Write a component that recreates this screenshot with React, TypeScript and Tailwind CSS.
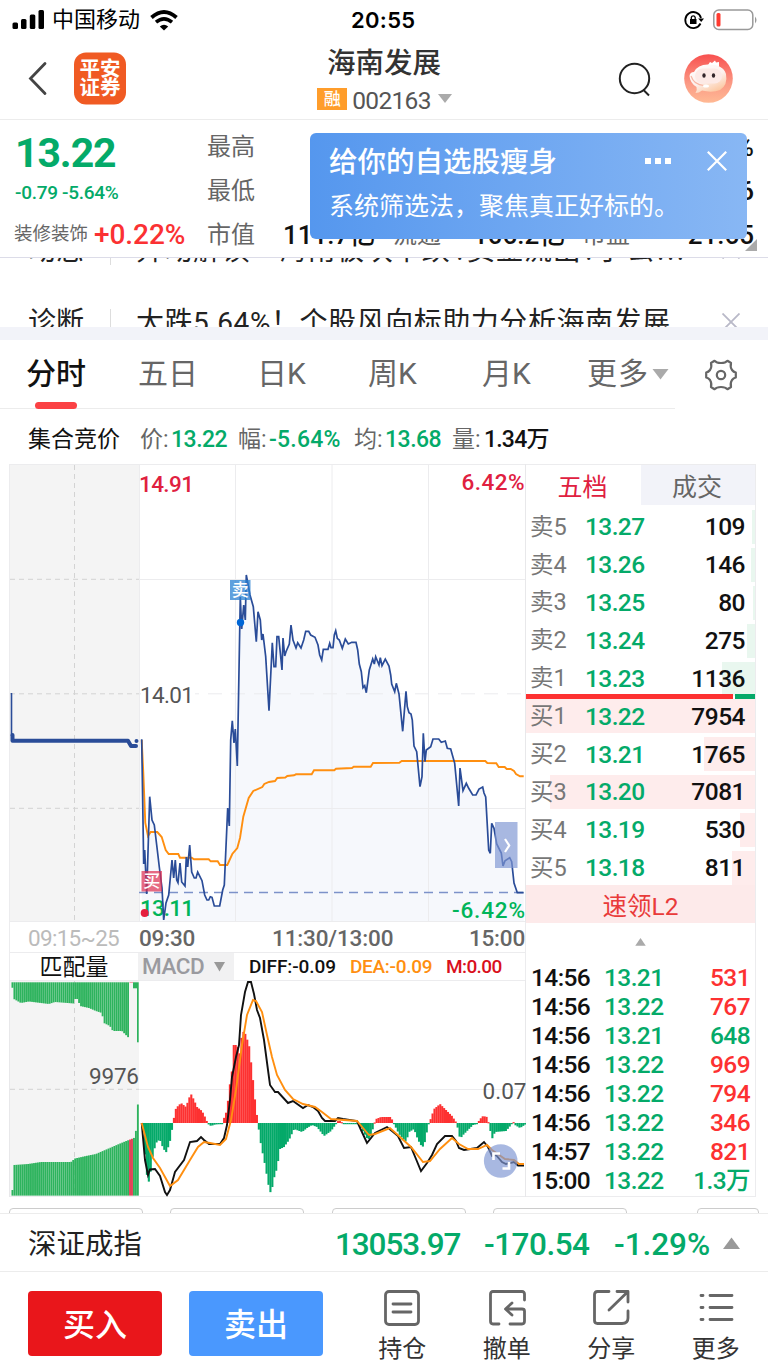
import React from 'react';

type Point = [number, number];

interface OrderLevel {
    label: string;
    price: string;
    volume: string;
    depth: number; // width of the depth bar in px
}

interface Trade {
    time: string;
    price: string;
    volume: string;
    up: boolean;
}

const SELL_LEVELS: OrderLevel[] = [
    { label: '卖5', price: '13.27', volume: '109', depth: 3 },
    { label: '卖4', price: '13.26', volume: '146', depth: 4 },
    { label: '卖3', price: '13.25', volume: '80', depth: 2 },
    { label: '卖2', price: '13.24', volume: '275', depth: 8 },
    { label: '卖1', price: '13.23', volume: '1136', depth: 33 },
];

const BUY_LEVELS: OrderLevel[] = [
    { label: '买1', price: '13.22', volume: '7954', depth: 229 },
    { label: '买2', price: '13.21', volume: '1765', depth: 51 },
    { label: '买3', price: '13.20', volume: '7081', depth: 205 },
    { label: '买4', price: '13.19', volume: '530', depth: 15 },
    { label: '买5', price: '13.18', volume: '811', depth: 23 },
];

const TRADES: Trade[] = [
    { time: '14:56', price: '13.21', volume: '531', up: true },
    { time: '14:56', price: '13.22', volume: '767', up: true },
    { time: '14:56', price: '13.21', volume: '648', up: false },
    { time: '14:56', price: '13.22', volume: '969', up: true },
    { time: '14:56', price: '13.22', volume: '794', up: true },
    { time: '14:56', price: '13.22', volume: '346', up: true },
    { time: '14:57', price: '13.22', volume: '821', up: true },
    { time: '15:00', price: '13.22', volume: '1.3万', up: false },
];

const PRICE_LINE =
    '141.7,739.3 143.7,864 144.7,850 146.7,894 149.7,796.7 152,820 154.3,825 156.7,845 159.3,867 162,888 163.7,920 166,903 168.7,895 172,860 173.7,878 175.3,860 176.7,880 178,882.7 180,863 181.7,882 185,886 186.3,857 187.7,867 189.7,845 191.7,872 194.3,878 196,878 197.7,872 202,880.7 204.7,895 207,900 208.7,900 210.3,896.7 212,897.3 214.3,906 219.7,906 222.7,890 224.3,885 227.7,808 229.3,826 230.7,740 232.3,720.7 234,743 235.3,729 237.3,766 240.3,597 241.7,629 243.7,605 245.3,620 246.3,575 250,595 253.3,606.7 256.3,641.7 258,611.7 260.3,620 261.7,640 263,634 265.7,656.7 269,710.7 272.3,642.7 274,666.7 275.7,666.7 277,636.7 278.7,636.7 282,670 283,638 284.7,656 286,651.7 289.3,644 291,625 293,640 296,648 297.7,642.7 301,648 303.7,640 305.7,631.3 308.7,631.3 310.7,635 315,637.3 318,645 319.7,655 321.7,660 323.3,649.3 328,649.3 329.7,643.3 331,647.7 333,647.7 334.3,635 335.7,630.7 337.3,638.3 339.3,640 342.3,648.3 345.3,639 348.3,644 351.7,642.3 356,642.3 357.7,650 359.3,664 361.3,671.7 363,687.7 364.7,685.7 366.3,692.7 369.3,670 372.7,659 374.3,664 375.7,656.7 379,665 380.3,657.7 382,665.7 385.3,659 389,666 390.7,675 391.7,684 394.7,691.7 396.3,683.3 399,694 402.7,731.3 406,691.3 407.3,706.7 409,712.7 411,714 412.3,720 414,746 416.7,751.7 420,786.7 422,776.7 423.3,733.3 425,761.7 426.3,750 430.7,746.7 433,739 438.7,739 441.3,742.3 445.3,741 447.3,748.3 450.7,749 454.7,763.3 458.7,806 460,768 463,790.7 466.3,783.3 468.7,788.3 472.7,795 476,795 479,789 482.7,787 484,793 485.7,797 488.7,850 490.3,853.3 491.7,823.3 494,828.3 496.7,844 501.3,853 503,866 505,860.7 509.7,857.7 511.7,861.7 514,883 517.3,892.7 523.7,892.7';

const AVERAGE_LINE =
    '141.7,740 143.3,773 145.3,823 148,836 150.7,832 157.3,832 161.7,837 165.7,850 168.7,854 178.3,854 180,857.7 191.7,857.7 194,859.3 208.7,859.3 210.7,861.3 217.7,861.3 220,865 227.3,865 232.3,854 237.3,848 240,838 243.3,816.7 248.7,798 253.3,791 262.3,787 264.3,784 269,782 275,781 277.3,778 285.3,777.5 287.3,776 294,775.3 296,774.3 311.7,774.3 314,770.3 334.3,770.3 336,768.7 352,768 353.7,766.7 370.7,766.7 373,763 399.3,762.7 401.7,761 485.3,761 487.3,763 496.3,763.3 498.7,767 504.7,767 506.7,769 510.7,769 514,771 516,774 520,776.3 523.7,776.3';

const DIFF_LINE =
    '141.7,1123 145,1160 148,1175 150,1169.5 155,1169 160,1176 165,1192 167,1195 170,1190 175,1172 184,1160 190,1142 197,1141 201,1137 204,1140 209,1144 220,1144 224,1138 227,1125 230,1100 232,1077 236,1057 239,1045 241,1015 245,992 248,982 251,982 254,994 257,1010 260,1018 264,1040 268,1070 270,1085 275,1092 278,1092 288,1103 293,1101 303,1108 308,1105 313,1107 318,1111 322,1118 325,1121 335,1121 338,1118 343,1119 357,1121 361,1130 367,1143 375,1133 387,1127 392,1131 398,1136 404,1148 411,1147 416,1159 421,1171 427,1163 432,1155 437,1144 445,1136 452,1136 456,1141 459,1148 464,1150 477,1148 484,1142 488,1147 492,1156 496,1155 502,1162 506,1164 514,1162 518,1165.5 524,1165.5';

const DEA_LINE =
    '141.7,1123 148,1147 153,1158 160,1168 170,1186 178,1180 190,1160 198,1147 204,1142 210,1143 220,1145 226,1139 231,1120 236,1090 242,1045 247,1015 253,1000 256,1001 262,1012 267,1035 272,1057 277,1075 285,1090 293,1099 303,1104 315,1107 322,1112 331,1119 357,1121 363,1128 369,1135 375,1134 390,1128 400,1137 411,1147 423,1162 430,1161 440,1149 452,1138 459,1144 468,1149 478,1149 487,1145 492,1150 505,1159 514,1160 519,1164 524,1164';

// outline of the MACD histogram around its zero line at 1123
const ZERO = 1123;
const MACD_PROFILE: Point[] = [
    [142, 1130], [145, 1168], [147, 1184], [149, 1178], [151, 1160], [153, 1150], [156, 1141], [159, 1140], [162, 1148],
    [165, 1152.5], [168, 1145], [170, 1137], [172, 1122], [175, 1108], [180, 1103], [185, 1107], [188, 1098], [190, 1094],
    [193, 1100], [196, 1107], [201, 1111], [204, 1117], [207, 1124], [210, 1126], [214, 1124.5], [221, 1124], [223, 1118],
    [226, 1110], [228, 1090], [231, 1070], [232.5, 1045], [236, 1045], [239, 1055], [241, 1031], [244, 1033], [248, 1045],
    [251, 1070], [254, 1100], [257, 1124], [260, 1145], [264, 1165], [268, 1188], [270, 1194], [273, 1178], [276, 1168],
    [279, 1149], [283, 1147], [288, 1140], [293, 1129], [301, 1132], [306, 1128], [311, 1125], [316, 1127], [323, 1136],
    [330, 1131], [335, 1124], [337, 1121], [340, 1121], [342, 1124], [358, 1124], [363, 1133], [367, 1140], [370, 1136],
    [373, 1124], [375, 1119], [380, 1117], [390, 1117], [392, 1122], [394, 1126], [398, 1134], [405, 1142], [408, 1132],
    [413, 1129], [417, 1140], [421, 1147], [423, 1146], [427, 1126], [430, 1118], [433, 1109], [439, 1104], [444, 1109],
    [451, 1116], [455, 1122], [457, 1129], [459, 1139], [462, 1135], [467, 1130], [472, 1125], [476, 1124], [479, 1119],
    [482, 1116], [486, 1117], [488, 1124], [491, 1139], [494, 1132], [505, 1131], [510, 1125], [512, 1121], [514, 1125],
    [519, 1128], [525, 1124],
];

const MATCHED_TOP: Point[] = [
    [11, 984], [13, 999], [20, 1003], [28, 1001.5], [40, 1003], [48, 1004], [54, 1002], [73, 1003.5], [74, 999], [77, 999],
    [79, 1006], [88, 1008], [95, 1011], [101, 1013], [103, 1023], [109, 1026], [112, 1031], [121, 1031], [129, 1039],
];

const MATCHED_BOTTOM: Point[] = [
    [11, 1190], [12.5, 1190], [13, 1165], [27, 1164], [40, 1162], [70, 1162], [74, 1158.5], [85, 1156], [95, 1154],
    [103, 1150.5], [110, 1147.5], [118, 1144], [124, 1141.5], [133, 1138], [135.5, 1129], [136.9, 1104.5], [139, 1104.5],
];

const valueAt = (profile: Point[], x: number) => {
    const i = profile.findIndex((p) => p[0] >= x);
    if (i <= 0) return profile[i === 0 ? 0 : profile.length - 1][1];
    const [x0, y0] = profile[i - 1];
    const [x1, y1] = profile[i];
    return y0 + ((y1 - y0) * (x - x0)) / (x1 - x0);
};

const range = (from: number, to: number, step: number) =>
    Array.from({ length: Math.ceil((to - from) / step) }, (_, i) => from + i * step);

const PriceChart: React.FC = () => (
    <svg width="517" height="458" viewBox="9 464 517 458" className="block">
        <rect x="9" y="464" width="130" height="458" fill="#f4f4f4" />
        <polygon points={`${PRICE_LINE} 523.7,922 141.7,922`} fill="#f6f8fc" />
        <g stroke="#ececee" strokeWidth="1">
            <path d="M9 464.5H526M139.5 464V922M235.5 464V922M332 464V922M428.5 464V922M139 579.5H525M139 808.5H525M9 921.5H526" fill="none" />
            <path d="M139 693.8H525" strokeDasharray="14 9" />
        </g>
        <path d="M74.5 465V922M10 579.3H139M10 693.8H139M10 808.3H139" fill="none" stroke="#d3d3d3" strokeDasharray="5 4" />
        <path d="M525.5 464V922" stroke="#e8e8ea" />
        <path d="M9.5 464V922" stroke="#ececee" />
        <path d="M139 892.5H525" stroke="#7d92c9" strokeWidth="1.5" strokeDasharray="9 6" />

        <path d="M11.5 693V736" stroke="#2a4c98" strokeWidth="1.6" />
        <path d="M12.5 735V740.8H128L131 746H136M136.5 741V741" fill="none" stroke="#2a4c98" strokeWidth="4" strokeLinecap="round" strokeLinejoin="round" />

        <g fontFamily="Roboto" fontSize="22.5" fontWeight="500">
            <rect x="141" y="682" width="54" height="24" fill="#fff" />
            <text x="139" y="491.5" textLength="55" fill="#e0203f">14.91</text>
            <text x="461.500" y="490" textLength="63" fill="#e0203f">6.42%</text>
            <text x="140" y="703" textLength="54" fontWeight="400" fill="#555">14.01</text>
            <text x="140" y="916" textLength="54" fill="#00b559">13.11</text>
            <text x="452" y="918" textLength="73" fill="#00b559">-6.42%</text>
        </g>

        <polyline points={AVERAGE_LINE} fill="none" stroke="#ff8f10" strokeWidth="1.9" />
        <polyline points={PRICE_LINE} fill="none" stroke="#2a4c98" strokeWidth="1.7" />

        <g fontFamily="'Noto Sans CJK SC', sans-serif" fontSize="17" fontWeight="500" fill="#fff" textAnchor="middle">
            <rect x="230" y="580" width="20.500" height="20" fill="#2a80d2" opacity="0.75" />
            <text x="240.300" y="596">卖</text>
            <rect x="141.500" y="871" width="20.500" height="20.500" fill="#e02d50" opacity="0.7" />
            <text x="151.800" y="887.300">买</text>
        </g>
        <circle cx="240.500" cy="622.500" r="3.700" fill="#0066d6" />
        <circle cx="144.700" cy="913" r="4" fill="#e5203f" />

        <rect x="495" y="822" width="22.500" height="46" fill="#7f97d3" opacity="0.68" />
        <path d="M505 839L509.200 845.500L505 852" fill="none" stroke="#fff" strokeWidth="2.200" />
    </svg>
);

const MacdChart: React.FC = () => (
    <svg width="517" height="217" viewBox="9 980 517 217" className="block">
        <rect x="9" y="980" width="130" height="216" fill="#f4f4f4" />
        <path d="M9 980.5H526M9 1196.500H526M139 1089.500H525" stroke="#ececee" fill="none" />
        <path d="M9.500 980V1197M525.500 980V1197" stroke="#e8e8ea" fill="none" />
        <path d="M74.500 981V1196M10 1089.300H139" stroke="#d3d3d3" strokeDasharray="5 4" fill="none" />

        {range(11.5, 128, 1.96).map((x) => (
            <rect key={x} x={x} y={982.3} width={1.85} height={valueAt(MATCHED_TOP, x) - 982.3} fill="#2db35d" />
        ))}
        <rect x="129.500" y="982" width="3.500" height="1" fill="#f4a0ac" />
        <rect x="133" y="982.300" width="4" height="6" fill="#2db35d" />
        <rect x="137" y="982.300" width="1.700" height="60" fill="#2db35d" />
        {range(11.5, 138, 1.96).map((x) => (
            <rect
                key={x}
                x={x}
                y={valueAt(MATCHED_BOTTOM, x)}
                width={1.85}
                height={1195.6 - valueAt(MATCHED_BOTTOM, x)}
                fill={x > 128.5 && x < 132 ? '#e23a50' : '#2db35d'}
            />
        ))}

        {range(142, 525, 1.93).map((x) => {
            const y = valueAt(MACD_PROFILE, x);
            return (
                <rect
                    key={x}
                    x={x}
                    y={Math.min(y, ZERO)}
                    width={2.1}
                    height={Math.max(Math.abs(y - ZERO), 1.2)}
                    fill={y < ZERO ? '#fd3131' : '#04a969'}
                />
            );
        })}
        <polyline points={DIFF_LINE} fill="none" stroke="#111" strokeWidth="1.9" />
        <polyline points={DEA_LINE} fill="none" stroke="#ff8f10" strokeWidth="1.9" />

        <g fontFamily="Roboto" fontSize="22.500" fill="#555">
            <text x="89" y="1084" textLength="50">9976</text>
            <text x="482.500" y="1099" textLength="44">0.07</text>
        </g>
        <circle cx="500.700" cy="1161" r="16.800" fill="#7f97d3" opacity="0.68" />
        <path d="M500 1153.500H493.500V1160M502.500 1168.500H509V1162" fill="none" stroke="#fff" strokeWidth="2.600" />
    </svg>
);

const StatusBar: React.FC = () => (
    <div className="flex h-10 items-center pl-3 pr-2.5 text-black">
        <svg width="33" height="20" viewBox="0 0 33 20">
            <rect x="0.500" y="12.500" width="5.500" height="6.500" rx="1.500" />
            <rect x="9" y="9" width="5.500" height="10" rx="1.500" />
            <rect x="17.800" y="4.500" width="5.500" height="14.500" rx="1.500" />
            <rect x="26.500" y="0" width="5.500" height="19" rx="1.500" />
        </svg>
        <span className="ml-[7px] text-[22px] leading-none">中国移动</span>
        <svg className="ml-2.5" width="28" height="21" viewBox="0 0 28 21" fill="none" stroke="#000">
            <path d="M1.500 7.500Q14 -3.500 26.500 7.500" strokeWidth="3.800" />
            <path d="M6 12.200Q14 5.500 22 12.200" strokeWidth="3.600" />
            <path d="M14 20.500L9.800 16.400Q14 13 18.200 16.400Z" fill="#000" stroke="none" />
        </svg>
        <span className="ml-[173px] font-[Inter] text-[22px] font-semibold leading-none tracking-[0.3px]">20:55</span>
        <svg className="ml-auto" width="20" height="20" viewBox="0 0 20 20" fill="none" stroke="#000" strokeWidth="1.800">
            <path d="M16.500 13.500A8 8 0 1 1 17 8" />
            <path d="M14.200 8.500H20L17.200 12Z" fill="#000" stroke="none" />
            <rect x="6" y="9" width="6.500" height="5" fill="#000" stroke="none" />
            <path d="M7.300 9.500V7.500A2 2 0 0 1 11.200 7.500V9.500" strokeWidth="1.300" />
        </svg>
        <svg className="ml-[9px]" width="45" height="22" viewBox="0 0 45 22">
            <rect x="0.800" y="1" width="39" height="19.500" rx="5" fill="none" stroke="#999" strokeWidth="1.500" />
            <rect x="3.500" y="4" width="4" height="13.500" rx="1.500" fill="#ff3b30" />
            <path d="M42 7.500Q45 11 42 14.500Z" fill="#999" />
        </svg>
    </div>
);

const RobotAvatar: React.FC = () => (
    <svg width="49" height="49" viewBox="0 0 49 49">
        <defs>
            <linearGradient id="avatarBg" x1="0" y1="0" x2="0" y2="1">
                <stop offset="0" stopColor="#f8504f" />
                <stop offset="0.600" stopColor="#fb9a85" />
                <stop offset="1" stopColor="#ffb994" />
            </linearGradient>
            <linearGradient id="avatarFace" x1="0" y1="0" x2="0.600" y2="1">
                <stop offset="0" stopColor="#fff" />
                <stop offset="0.600" stopColor="#fdf1ed" />
                <stop offset="1" stopColor="#fcc9a4" />
            </linearGradient>
        </defs>
        <circle cx="24.500" cy="24.500" r="24.300" fill="url(#avatarBg)" />
        <path d="M24 11L26 8L28 9L31 6.500L32 8.500L35 8L35 13Z" fill="#fff" />
        <path d="M5.500 22Q6 18 10 18Q14 10 25 10.500Q39 10.500 42 20Q44 31 36 36Q28 39 18 36.500Q15 39 11.500 39Q13.500 36 12.500 33Q6 29 5.500 22Z" fill="url(#avatarFace)" />
        <rect x="11" y="14.500" width="27" height="15" rx="7.500" fill="#fdeae6" />
        <path d="M7 22Q10 31 20 31.500" fill="none" stroke="#f8b5a2" strokeWidth="1.200" />
        <ellipse cx="22" cy="32" rx="3" ry="1.600" fill="#fff" />
        <ellipse cx="20" cy="21.500" rx="1.700" ry="2.200" fill="#33262a" />
        <ellipse cx="29.500" cy="21.500" rx="1.700" ry="2.200" fill="#33262a" />
    </svg>
);

const Header: React.FC = () => (
    <header className="flex h-20 items-center border-b border-[#ececec]">
        <svg className="ml-[27px] -mt-1" width="22" height="36" viewBox="0 0 22 36" fill="none" stroke="#444" strokeWidth="2.800" strokeLinecap="round">
            <path d="M18 3.500L3.500 18.500L18 33.500" />
        </svg>
        <div className="ml-[25px] flex h-[52px] w-[52px] -translate-y-[1.500px] flex-col items-center justify-center rounded-xl bg-[#f05a23] text-[20.500px] font-bold leading-[19px] text-white">
            <span>平安</span>
            <span>证券</span>
        </div>
        <div className="ml-[180px] flex w-[156px] flex-col items-center pt-0.5">
            <div className="text-[28.500px] font-medium leading-[38px] text-[#333]">海南发展</div>
            <div className="-mt-px flex h-[34px] items-center">
                <span className="ml-px flex h-[22px] w-[30px] items-center justify-center bg-[#ff9d2b] text-[17px] font-medium leading-none text-white">融</span>
                <span className="ml-[5px] mt-1 text-[24.500px] leading-none tracking-[-0.700px] text-[#555]">002163</span>
                <svg className="ml-[7px]" width="14" height="10" viewBox="0 0 14 10">
                    <path d="M0 0H14L7 9Z" fill="#aaa" />
                </svg>
            </div>
        </div>
        <svg className="ml-[156px]" width="34" height="36" viewBox="0 0 34 36" fill="none" stroke="#222" strokeWidth="2">
            <circle cx="16.500" cy="16.500" r="14.700" />
            <path d="M25.500 28L31 33.500" />
        </svg>
        <div className="-mt-[3px] ml-8">
            <RobotAvatar />
        </div>
    </header>
);

const Banner: React.FC = () => (
    <div className="absolute left-[310px] top-[13px] flex h-[106px] w-[437px] flex-col rounded-md bg-linear-to-r from-[#5597ee] to-[#88b7f4] pl-[19px] pr-5 pt-2 text-white">
        <div className="flex h-11 items-center">
            <span className="text-[28.500px] font-medium leading-none">给你的自选股瘦身</span>
            <span className="-mt-1 ml-auto flex gap-1">
                <i className="h-[5.500px] w-1.5 bg-white" />
                <i className="h-[5.500px] w-1.5 bg-white" />
                <i className="h-[5.500px] w-1.5 bg-white" />
            </span>
            <svg className="-mt-[5px] ml-9" width="20" height="20" viewBox="0 0 20 20" stroke="#fff" strokeWidth="2.200">
                <path d="M0.800 0.800L19.200 19.200M19.200 0.800L0.800 19.200" />
            </svg>
        </div>
        <div className="whitespace-nowrap text-[25px] leading-[44px]">系统筛选法，聚焦真正好标的。</div>
    </div>
);

const Quote: React.FC = () => (
    <section className="relative flex h-[138px] border-b border-[#dcdce8]">
        <div className="w-[207px] pl-[15px]">
            <div className="mt-2 h-[50px] text-[41px] font-bold leading-[51px] tracking-[-1.100px] text-[#04aa69]">13.22</div>
            <div className="h-[26px] whitespace-nowrap text-[19px] font-medium leading-[29px] tracking-[-0.300px] text-[#04aa69]">-0.79 -5.64%</div>
            <div className="mt-[11px] flex h-[38px] items-center whitespace-nowrap">
                <span className="-ml-px text-[18.500px] leading-none text-[#666]">装修装饰</span>
                <span className="ml-1.5 mt-0.5 text-[28px] font-medium leading-none tracking-[-0.050px] text-[#fb3133]">+0.22%</span>
            </div>
        </div>
        <div className="flex w-[76px] flex-col pt-[5px] text-[24px] leading-[44px] text-[#666]">
            <span>最高</span>
            <span>最低</span>
            <span>市值</span>
        </div>
        <div className="flex grow flex-col items-end pr-[14px] text-[26px] font-medium leading-[44px] text-[#111]">
            <span className="mt-[5px]">5.21%</span>
            <span>13.76</span>
            <div className="flex w-full items-center whitespace-nowrap">
                <span className="w-[110px]">111.7亿</span>
                <span className="w-[80px] text-[24px] font-normal text-[#666]">流通</span>
                <span className="w-[109px]">106.2亿</span>
                <span className="text-[24px] font-normal text-[#666]">市盈</span>
                <span className="ml-auto">21.65</span>
            </div>
        </div>
        <svg className="absolute right-[11px] top-[119px]" width="12" height="12" viewBox="0 0 12 12">
            <path d="M12 0V12H0Z" fill="#aaa" />
        </svg>
        <Banner />
    </section>
);

const NewsRow: React.FC<{ tag: string; children: React.ReactNode }> = ({ tag, children }) => (
    <div className="flex h-[72px] shrink-0 items-center pl-7 pr-7 text-[28px] leading-none text-[#222]">
        <span className="w-[82px]">{tag}</span>
        <span className="h-7 w-px bg-[#ddd]" />
        <span className="ml-[25px] flex whitespace-nowrap tracking-[0.550px]">{children}</span>
        <svg className="-mt-0.5 ml-auto" width="18" height="18" viewBox="0 0 18 18" stroke="#b9b9c8" strokeWidth="1.800">
            <path d="M0.500 0.500L17.500 17.500M17.500 0.500L0.500 17.500" />
        </svg>
    </div>
);

const PeriodTabs: React.FC = () => (
    <nav className="flex h-[69px] items-start text-[30px] leading-[68px] text-[#666]">
        <div className="relative flex h-[69px] w-[675px] whitespace-nowrap border-b border-[#ececec]">
            <span className="ml-[26px] w-[112px] font-medium text-[#111]">分时</span>
            <span className="w-[119px]">五日</span>
            <span className="w-[111px]">日K</span>
            <span className="w-[114px]">周K</span>
            <span className="w-[105px]">月K</span>
            <span className="tracking-[1px]">更多</span>
            <svg className="ml-[3px] mt-[29px]" width="17" height="11" viewBox="0 0 17 11">
                <path d="M0.500 0H16.500L8.500 10.500Z" fill="#aaa" />
            </svg>
            <i className="absolute bottom-[-1px] left-[35px] h-[7px] w-[42px] rounded-sm bg-[#fb4144]" />
        </div>
        <svg className="ml-[30px] mt-[19px]" width="32" height="32" viewBox="0 0 32 32" fill="none" stroke="#666" strokeWidth="2.200" strokeLinejoin="round">
            <path d="M9.500 1.800Q11.500 4 16 4Q20.500 4 22.500 1.800L26 4Q25 8 27 11Q28.500 13 30.800 13.500V18.500Q28.500 19 27 21Q25 24 26 28L22.500 30.200Q20.500 28 16 28Q11.500 28 9.500 30.200L6 28Q7 24 5 21Q3.500 19 1.200 18.500V13.500Q3.500 13 5 11Q7 8 6 4Z" />
            <circle cx="16" cy="16" r="4.200" />
        </svg>
    </nav>
);

const Summary: React.FC = () => (
    <div className="flex h-[55px] items-center whitespace-nowrap pl-7 pt-[5px] text-[23px] leading-none text-[#666]">
        <span className="w-[112px] text-[#111]">集合竞价</span>
        <span className="w-[31px]">价:</span>
        <span className="w-[67px] font-medium tracking-[-0.500px] text-[#04aa69]">13.22</span>
        <span className="w-[31px]">幅:</span>
        <span className="w-[85px] font-medium tracking-[0.200px] text-[#04aa69]">-5.64%</span>
        <span className="w-[31px]">均:</span>
        <span className="w-[67px] font-medium tracking-[-0.500px] text-[#04aa69]">13.68</span>
        <span className="w-8">量:</span>
        <span className="font-medium tracking-[-0.800px] text-[#111]">1.34万</span>
    </div>
);

const LevelRow: React.FC<{ level: OrderLevel; side: 'sell' | 'buy' }> = ({ level, side }) => (
    <div className="relative flex h-[37.900px] items-center pl-1 pr-[10px] pt-px text-[24.500px] leading-none">
        <i
            className={`absolute right-0 top-[2px] h-[34px] ${side === 'sell' ? 'bg-[#e9f7ef]' : 'bg-[#feecec]'}`}
            style={{ width: level.depth }}
        />
        <span className="relative w-[55px] text-[23.500px] text-[#777]">{level.label}</span>
        <span className="relative font-medium tracking-[-0.600px] text-[#04aa69]">{level.price}</span>
        <span className="relative ml-auto font-medium tracking-[-0.500px] text-[#111]">{level.volume}</span>
    </div>
);

const OrderBook: React.FC = () => (
    <aside className="flex h-[733px] w-[230px] flex-col border-b border-r border-t border-[#ececee]">
        <div className="flex h-10 text-[25px] leading-[46px]">
            <span className="w-[113px] text-center text-[#e0203f]">五档</span>
            <span className="ml-0.5 grow bg-[#f2f3f9] pr-0.5 text-center text-[#666]">成交</span>
        </div>
        <div className="relative mt-[3px]">
            {SELL_LEVELS.map((level) => (
                <LevelRow key={level.label} level={level} side="sell" />
            ))}
            {BUY_LEVELS.map((level) => (
                <LevelRow key={level.label} level={level} side="buy" />
            ))}
            <div className="absolute left-0 right-0 top-[186px] flex h-[5px] gap-[2px]">
                <i className="w-[207px] bg-[#fd3131]" />
                <i className="grow bg-[#04a969]" />
            </div>
        </div>
        <div className="-mt-[2px] h-[38px] bg-[#fdeaea] text-center text-[24.500px] leading-[44px] text-[#e93b3a]">速领L2</div>
        <svg className="ml-[108px] mt-[15px]" width="13" height="10" viewBox="0 0 13 10">
            <path d="M0 9.500H13L6.500 0Z" fill="#aaa" />
        </svg>
        <div className="mt-[18px] flex flex-col">
            {TRADES.map((trade, i) => (
                <div key={i} className="flex h-[29px] items-center pl-[5px] pr-[5px] text-[24.500px] font-medium leading-none tracking-[-0.600px]">
                    <span className="w-[73px] text-[#111]">{trade.time}</span>
                    <span className="text-[#04aa69]">{trade.price}</span>
                    <span className={`ml-auto ${trade.up ? 'text-[#fd3131]' : 'text-[#04aa69]'}`}>{trade.volume}</span>
                </div>
            ))}
        </div>
    </aside>
);

const ChartPanel: React.FC = () => (
    <div className="w-[517px]">
        <PriceChart />
        <div className="flex h-[30px] items-center border-x border-[#ececee] pt-[3px] text-[22.500px] leading-none text-[#666]">
            <span className="ml-[18px] w-[111px] tracking-[-0.700px] text-[#bbb]">09:15~25</span>
            <span className="w-[133px] font-medium tracking-[-0.200px]">09:30</span>
            <span className="font-medium tracking-[-0.150px]">11:30/13:00</span>
            <span className="ml-auto font-medium tracking-[-0.200px]">15:00</span>
        </div>
        <div className="flex h-7 items-center border-x border-t border-[#ececee] text-[19px] font-medium leading-none">
            <span className="w-32 pt-0.5 text-center text-[23px] font-normal text-[#111]">匹配量</span>
            <span className="flex h-7 w-24 items-center bg-[#f1f1f2] pl-1 text-[22.500px] tracking-[-0.400px] text-[#9a9a9f]">
                MACD
                <svg className="ml-2.5" width="11" height="10" viewBox="0 0 11 10">
                    <path d="M0 0H11L5.500 9.500Z" fill="#999" />
                </svg>
            </span>
            <span className="ml-[15px] w-[101px] tracking-[-0.100px] text-[#111]">DIFF:-0.09</span>
            <span className="w-[96px] tracking-[-0.300px] text-[#ff8f10]">DEA:-0.09</span>
            <span className="tracking-[-0.600px] text-[#d90f1c]">M:0.00</span>
        </div>
        <MacdChart />
    </div>
);

const IndexBar: React.FC = () => (
    <div className="flex h-[59px] items-center border-y border-[#ececec] pt-[5px] text-[31.500px] font-medium leading-none text-[#04aa69]">
        <span className="ml-7 text-[28.500px] font-normal text-[#222]">深证成指</span>
        <span className="ml-[193px] w-[149px] tracking-[-1.100px]">13053.97</span>
        <span className="w-[130px] tracking-[-0.500px]">-170.54</span>
        <span className="w-[109px] tracking-[-0.050px]">-1.29%</span>
        <svg className="-mt-[5px]" width="17" height="12" viewBox="0 0 17 12">
            <path d="M0 12H17L8.500 0.500Z" fill="#999" />
        </svg>
    </div>
);

const NavItem: React.FC<{ label: string; children: React.ReactNode }> = ({ label, children }) => (
    <div className="flex w-[104.500px] flex-col items-center pt-[17px]">
        <svg width="38" height="38" viewBox="0 0 38 38" fill="none" stroke="#666" strokeWidth="2.800" strokeLinecap="round" strokeLinejoin="round">
            {children}
        </svg>
        <span className="mt-2 text-[24px] leading-[28px] text-[#333]">{label}</span>
    </div>
);

const BottomNav: React.FC = () => (
    <footer className="flex h-[94px]">
        <button className="ml-7 mt-[19px] h-[65px] w-[134px] rounded bg-[#e9161b] text-[32px] font-medium leading-[68px] text-white">买入</button>
        <button className="ml-[27px] mt-[19px] h-[65px] w-[134px] rounded bg-[#4a98fe] text-[32px] font-medium leading-[68px] text-white">卖出</button>
        <div className="ml-[27px] flex">
            <NavItem label="持仓">
                <rect x="2.500" y="2.500" width="33" height="33" rx="3.500" />
                <path d="M10 15H28M10 23H28" />
            </NavItem>
            <NavItem label="撤单">
                <path d="M36.500 11V5Q36.500 2.500 34 2.500H5Q2.500 2.500 2.500 5V32Q2.500 35 5 35H11M22 35H34Q36.500 35 36.500 32V22Q36.500 20 34 20H18M24 14L17.500 20L24 26" />
            </NavItem>
            <NavItem label="分享">
                <path d="M17 2.500H5.500Q2.500 2.500 2.500 5.500V31.500Q2.500 34.500 5.500 34.500H30Q36 34.500 36 29V22M25 2.500H36V13M35.500 3L17 21" />
            </NavItem>
            <NavItem label="更多">
                <path d="M4 6.500H6M4 18.500H6M4 30.500H6M13 6.500H35M13 18.500H35M13 30.500H35" />
            </NavItem>
        </div>
    </footer>
);

const App: React.FC = () => (
    <div className="flex h-[1366px] w-[768px] flex-col overflow-hidden bg-white font-[Roboto,'Noto_Sans_CJK_SC',sans-serif]">
        <StatusBar />
        <Header />
        <Quote />
        <section className="flex h-[69px] flex-col overflow-hidden">
            <div className="-mt-[43px]" />
            <NewsRow tag="动态">
                <span className="w-[143px]">异动解读</span>
                <span className="w-[177px]">海南板块下跌</span>
                <span className="w-[11px]">!</span>
                <span className="w-[118px]">资金流出</span>
                <span className="w-[11px]">!</span>
                <span className="tracking-[2.500px]">子公...</span>
            </NewsRow>
            <NewsRow tag="诊断">大跌5.64%！个股风向标助力分析海南发展</NewsRow>
        </section>
        <div className="h-[13px] bg-[#f2f3f9]" />
        <PeriodTabs />
        <Summary />
        <main className="flex pl-[9px]">
            <ChartPanel />
            <OrderBook />
        </main>
        <div className="flex h-4 overflow-hidden pl-[9px] pt-[11px]">
            <i className="h-10 w-[134px] shrink-0 rounded border border-[#ccc]" />
            <i className="ml-[27px] h-10 w-[134px] shrink-0 rounded border border-[#ccc]" />
            <i className="ml-[28px] h-10 w-[134px] shrink-0 rounded border border-[#ccc]" />
            <i className="ml-[27px] h-10 w-[134px] shrink-0 rounded border border-[#ccc]" />
            <i className="ml-[70px] h-10 w-[62px] shrink-0 rounded border border-[#ccc]" />
        </div>
        <IndexBar />
        <BottomNav />
    </div>
);

export default App;
